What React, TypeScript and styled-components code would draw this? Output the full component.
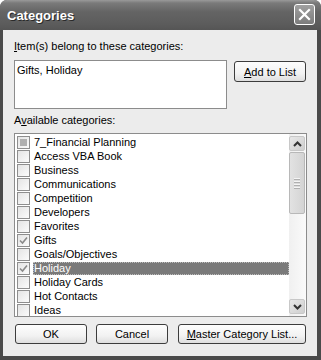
import styled, { createGlobalStyle } from 'styled-components';

const GlobalStyle = createGlobalStyle`
  html, body {
    margin: 0;
    padding: 0;
    background: #ffffff;
  }
  body {
    font-family: "Liberation Sans", Arial, sans-serif;
    font-size: 11px;
    color: #000;
  }
`;

const categories = [
  { name: '7_Financial Planning', state: 'mixed' },
  { name: 'Access VBA Book', state: 'off' },
  { name: 'Business', state: 'off' },
  { name: 'Communications', state: 'off' },
  { name: 'Competition', state: 'off' },
  { name: 'Developers', state: 'off' },
  { name: 'Favorites', state: 'off' },
  { name: 'Gifts', state: 'on' },
  { name: 'Goals/Objectives', state: 'off' },
  { name: 'Holiday', state: 'on', selected: true },
  { name: 'Holiday Cards', state: 'off' },
  { name: 'Hot Contacts', state: 'off' },
  { name: 'Ideas', state: 'off' },
];

type CheckState = 'on' | 'off' | 'mixed';

const CheckMark = ({ state }: { state: CheckState }) => (
  <CheckBox>
    {state === 'mixed' && <Mixed />}
    {state === 'on' && (
      <svg width="11" height="11" viewBox="0 0 11 11">
        <path d="M2 5.5 L4.5 8 L9 2.5" fill="none" stroke="#8a8a8a" strokeWidth="1.6" />
      </svg>
    )}
  </CheckBox>
);

const Categories = () => {
  return (
    <Window>
      <TitleBar>
        <Title>Categories</Title>
        <CloseButton>
          <svg width="13" height="13" viewBox="0 0 13 13">
            <path d="M2 2 L11 11 M11 2 L2 11" stroke="#fff" strokeWidth="2.2" strokeLinecap="square" />
          </svg>
        </CloseButton>
      </TitleBar>
      <Body>
        <Label>
          <u>I</u>tem(s) belong to these categories:
        </Label>
        <TopRow>
          <TextBox>Gifts, Holiday</TextBox>
          <Button $width={72} $height={21}>
            <u>A</u>dd to List
          </Button>
        </TopRow>
        <Label $top={5}>
          A<u>v</u>ailable categories:
        </Label>
        <ListBox>
          <Rows>
            {categories.map((c) => (
              <Row key={c.name}>
                <CheckMark state={c.state as CheckState} />
                <RowText $selected={!!c.selected}>{c.name}</RowText>
              </Row>
            ))}
          </Rows>
          <ScrollBar>
            <ScrollButton>
              <svg width="9" height="6" viewBox="0 0 9 6">
                <path d="M1 5 L4.5 1.5 L8 5" fill="none" stroke="#333" strokeWidth="2" />
              </svg>
            </ScrollButton>
            <Thumb>
              <Grip />
              <Grip />
              <Grip />
              <Grip />
            </Thumb>
            <Track />
            <ScrollButton>
              <svg width="9" height="6" viewBox="0 0 9 6">
                <path d="M1 1 L4.5 4.5 L8 1" fill="none" stroke="#333" strokeWidth="2" />
              </svg>
            </ScrollButton>
          </ScrollBar>
        </ListBox>
        <ButtonRow>
          <Button $width={72} $height={20}>OK</Button>
          <Button $width={72} $height={20}>Cancel</Button>
          <Button $width={128} $height={20}>
            <u>M</u>aster Category List...
          </Button>
        </ButtonRow>
      </Body>
    </Window>
  );
};

const Window = styled.div`
  width: 321px;
  height: 360px;
  display: flex;
  flex-direction: column;
  background: #4a4a4a;
  border-radius: 7px 7px 0 0;
  overflow: hidden;
  box-sizing: border-box;
`;

const TitleBar = styled.div`
  height: 30px;
  flex: none;
  display: flex;
  align-items: center;
  justify-content: space-between;
  padding: 0 6px 0 7px;
  background: linear-gradient(#9a9a9a 0px, #7a7a7a 3px, #646464 12px, #5c5c5c 24px, #555 30px);
`;

const Title = styled.div`
  color: #fff;
  font-weight: bold;
  font-size: 13px;
  text-shadow: 1px 1px 0 #2a2a2a;
  margin-top: 1px;
`;

const CloseButton = styled.div`
  width: 19px;
  height: 19px;
  border: 1px solid #fff;
  border-radius: 3px;
  background: linear-gradient(#a0a0a0, #7c7c7c);
  display: flex;
  align-items: center;
  justify-content: center;
  margin-top: -1px;
`;

const Body = styled.div`
  flex: 1;
  margin: 0 4px 4px 3px;
  background: #ececec;
  padding: 10px 10px 0 11px;
  display: flex;
  flex-direction: column;
`;

const Label = styled.div<{ $top?: number }>`
  line-height: 13px;
  height: 13px;
  margin-top: ${({ $top }) => $top ?? 0}px;
  white-space: nowrap;
`;

const TopRow = styled.div`
  display: flex;
  align-items: flex-start;
  gap: 7px;
  margin-top: 7px;
`;

const TextBox = styled.div`
  width: 213px;
  height: 49px;
  box-sizing: border-box;
  border: 1px solid #8c8c8c;
  background: #fff;
  padding: 3px 2px;
  line-height: 13px;
`;

const Button = styled.div<{ $width: number; $height: number }>`
  width: ${({ $width }) => $width}px;
  height: ${({ $height }) => $height}px;
  box-sizing: border-box;
  border: 1px solid #3c3c3c;
  border-radius: 3px;
  background: linear-gradient(#fdfdfd, #f2f2f2 60%, #dedede);
  display: flex;
  align-items: center;
  justify-content: center;
  white-space: nowrap;
  margin-top: 1px;
`;

const ListBox = styled.div`
  margin-top: 6px;
  width: 293px;
  height: 184px;
  box-sizing: border-box;
  border: 1px solid #8c8c8c;
  background: #fff;
  display: flex;
  overflow: hidden;
`;

const Rows = styled.div`
  flex: 1;
  padding-top: 1px;
  overflow: hidden;
`;

const Row = styled.div`
  height: 14px;
  display: flex;
  align-items: center;
  padding-left: 2px;
  gap: 3px;
`;

const CheckBox = styled.div`
  width: 13px;
  height: 13px;
  box-sizing: border-box;
  border: 1px solid #8e8e8e;
  background: linear-gradient(135deg, #e4e4e4, #fbfbfb);
  display: flex;
  align-items: center;
  justify-content: center;
  flex: none;
`;

const Mixed = styled.div`
  width: 7px;
  height: 7px;
  background: #b0b0b0;
`;

const RowText = styled.div<{ $selected: boolean }>`
  flex: 1;
  height: 13px;
  line-height: 13px;
  padding-left: 1px;
  box-sizing: border-box;
  white-space: nowrap;
  color: ${({ $selected }) => ($selected ? '#fff' : '#000')};
  background: ${({ $selected }) => ($selected ? '#7a7a7a' : 'transparent')};
  outline: ${({ $selected }) => ($selected ? '1px dotted #bdbdbd' : 'none')};
  outline-offset: -1px;
`;

const ScrollBar = styled.div`
  width: 17px;
  flex: none;
  display: flex;
  flex-direction: column;
  background: linear-gradient(90deg, #f0f0f0, #fafafa);
  padding: 2px 0 2px 0;
  box-sizing: border-box;
`;

const ScrollButton = styled.div`
  height: 15px;
  width: 16px;
  box-sizing: border-box;
  border: 1px solid #c8c8c8;
  border-radius: 2px;
  background: linear-gradient(135deg, #e8e8e8, #cfcfcf);
  display: flex;
  align-items: center;
  justify-content: center;
  flex: none;
`;

const Thumb = styled.div`
  height: 62px;
  width: 16px;
  margin-top: 1px;
  box-sizing: border-box;
  border: 1px solid #b8b8b8;
  border-radius: 2px;
  background: linear-gradient(90deg, #e2e2e2, #d4d4d4);
  display: flex;
  flex-direction: column;
  align-items: center;
  justify-content: center;
  gap: 1px;
`;

const Grip = styled.div`
  width: 6px;
  height: 1px;
  background: #f4f4f4;
  border-bottom: 1px solid #b0b0b0;
`;

const Track = styled.div`
  flex: 1;
`;

const ButtonRow = styled.div`
  display: flex;
  gap: 9px;
  margin-top: 6px;
  padding-left: 1px;

  & > :last-child {
    margin-left: 1px;
  }
`;

const App = () => (
  <>
    <GlobalStyle />
    <Categories />
  </>
);

export default App;
